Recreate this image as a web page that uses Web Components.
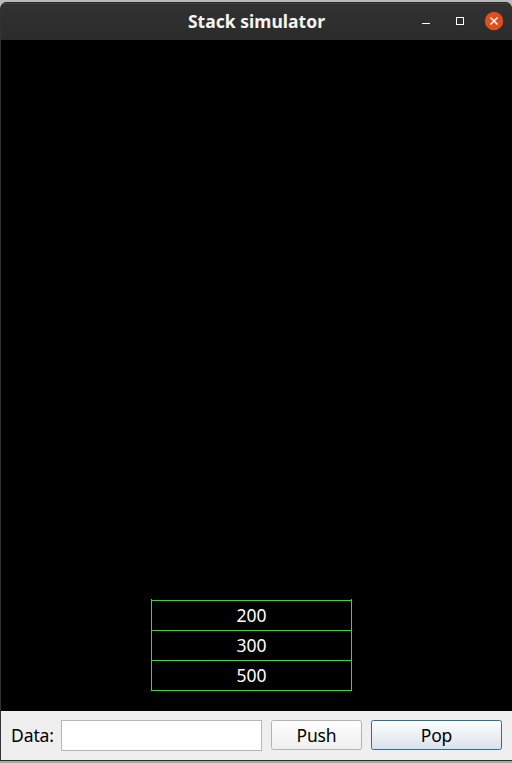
<!DOCTYPE html>
<html lang="en">
<head>
<meta charset="utf-8">
<title>Stack simulator</title>
<style>
html,body{margin:0;height:100%;overflow:hidden;background:linear-gradient(#b9bbba 0 50%,#a5a9a4 50%)}
body{font-family:"Noto Sans","Open Sans",sans-serif;font-size:17.500px}
</style>
</head>
<body>
<app-window>
  <title-bar slot="title">Stack simulator</title-bar>
  <stack-view>
    <stack-item>200</stack-item>
    <stack-item>300</stack-item>
    <stack-item>500</stack-item>
  </stack-view>
  <control-bar slot="controls">
    <data-field>Data:</data-field>
    <push-button style="width:91px">Push</push-button>
    <push-button style="width:131px" active>Pop</push-button>
  </control-bar>
</app-window>
<script>
const define = (name, html) => customElements.define(name, class extends HTMLElement {
  constructor() {
    super();
    this.attachShadow({ mode: "open" }).innerHTML = html;
  }
});

define("app-window", `<style>
:host{display:flex;flex-direction:column;box-sizing:border-box;height:761px;padding-top:2px}
.frame{display:flex;flex-direction:column;flex:1;box-sizing:border-box;border-left:1px solid #333;border-bottom:1px solid #2e302e;border-radius:7px 7px 0 0;background:#000;overflow:hidden}
main{flex:1;display:flex;justify-content:center;align-items:flex-end}
</style><div class="frame"><slot name="title"></slot><main><slot></slot></main><slot name="controls"></slot></div>`);

define("title-bar", `<style>
:host{display:grid;grid-template-columns:1fr auto 1fr;align-items:center;height:38px;box-sizing:border-box;
 border-top:1px solid #292929;box-shadow:inset 0 1px #414141;background:linear-gradient(#323232,#2b2b2b);color:#f5f5f5;font-weight:700;font-size:17.500px}
.title{letter-spacing:.03px;white-space:nowrap;grid-column:2;padding-bottom:2px}
svg{justify-self:end;display:block}
</style><span class="title"><slot></slot></span>
<svg width="94" height="37" viewBox="0 0 94 37" fill="none">
<path d="M4 20.500h8" stroke="#fff"/>
<path d="M38.500 14.500h7v7h-7z" stroke="#fff" shape-rendering="crispEdges"/>
<circle cx="76" cy="18" r="9.200" fill="#e24e1b"/>
<path d="M72.500 14.500l7 7m0-7l-7 7" stroke="#fff" stroke-width="1.500"/>
</svg>`);

define("stack-view", `<style>
:host{display:flex;flex-direction:column;box-sizing:border-box;width:201px;margin:0 11px 20px 0;padding-top:1px;border:solid #0f0;border-width:0 1px 1px}
</style><slot></slot>`);

define("stack-item", `<style>
:host{display:block;box-sizing:border-box;height:30px;padding-left:1px;border-top:1px solid #0f0;color:#fff;text-align:center;line-height:29px}
</style><slot></slot>`);

define("control-bar", `<style>
:host{display:flex;align-items:flex-start;gap:9px;box-sizing:border-box;height:49px;padding:9px 10px 0;background:#efefef;color:#000}
</style><slot></slot>`);

define("data-field", `<style>
:host{display:flex;width:251px;height:31px}
label{width:50px;line-height:30px;white-space:nowrap;letter-spacing:-.1px}
input{flex:1;min-width:0;box-sizing:border-box;height:31px;margin:0;padding:0 6px;border:1px solid #b6b6b6;border-radius:0;background:#fff;font:inherit;outline:0}
</style><label for="data"><slot></slot></label><input id="data" type="text">`);

define("push-button", `<style>
:host{display:block}
button{display:block;box-sizing:border-box;width:100%;height:30px;margin:0;padding:0;border:1px solid #b3b3b3;border-radius:2.500px;
 background:linear-gradient(#fefefe,#efefef);color:#000;font:inherit;line-height:28px;letter-spacing:-.2px}
:host([active]) button{border-color:#266f9f;background:linear-gradient(#fdfeff,#dae2e9)}
</style><button type="button"><slot></slot></button>`);
</script>
</body>
</html>
